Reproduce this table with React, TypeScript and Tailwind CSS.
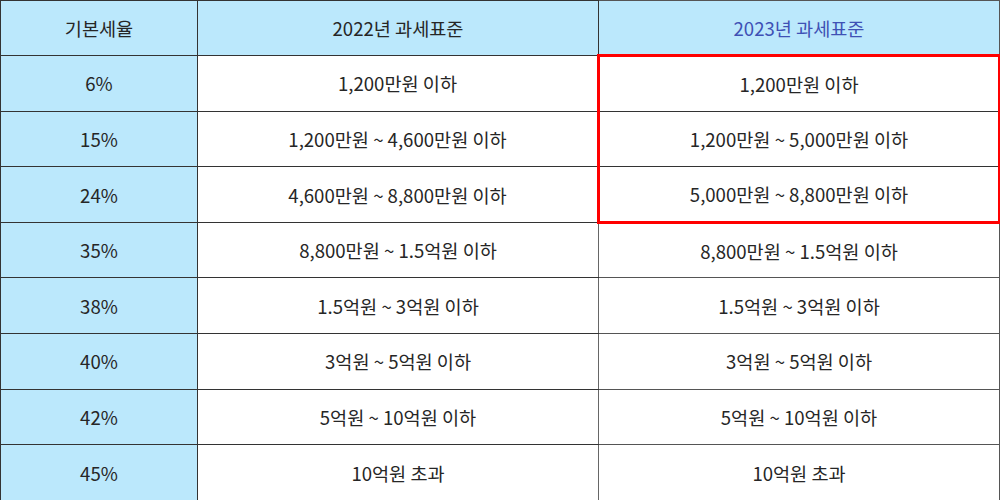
import React from "react";

const rows: [string, string, string][] = [
  ["6%", "1,200만원 이하", "1,200만원 이하"],
  ["15%", "1,200만원 ~ 4,600만원 이하", "1,200만원 ~ 5,000만원 이하"],
  ["24%", "4,600만원 ~ 8,800만원 이하", "5,000만원 ~ 8,800만원 이하"],
  ["35%", "8,800만원 ~ 1.5억원 이하", "8,800만원 ~ 1.5억원 이하"],
  ["38%", "1.5억원 ~ 3억원 이하", "1.5억원 ~ 3억원 이하"],
  ["40%", "3억원 ~ 5억원 이하", "3억원 ~ 5억원 이하"],
  ["42%", "5억원 ~ 10억원 이하", "5억원 ~ 10억원 이하"],
  ["45%", "10억원 초과", "10억원 초과"],
];

export default function App() {
  return (
    <div
      className="w-[1000px] h-[500px] overflow-hidden bg-white"
      style={{ fontFamily: '"Noto Sans CJK KR", "Noto Sans", sans-serif' }}
    >
      <table className="w-[999px] border-collapse table-fixed text-[18.6px] text-[#262626]">
        <colgroup>
          <col className="w-[197px]" />
          <col className="w-[401px]" />
          <col className="w-[401px]" />
        </colgroup>
        <thead>
          <tr className="h-[55px] bg-[#bbe8fc]">
            <th className="border border-[#333] font-normal text-center align-middle">기본세율</th>
            <th className="border border-[#333] font-normal text-center align-middle">2022년 과세표준</th>
            <th className="border border-[#555] border-b-2 border-b-[#ff0000] font-normal text-center align-middle text-[#3f51b5]">
              2023년 과세표준
            </th>
          </tr>
        </thead>
        <tbody>
          {rows.map((r, i) => {
            const red = i < 3;
            const cls = red
              ? "border-x-[3px] border-x-[#ff0000] " +
                (i === 0 ? "border-t-[3px] border-t-[#ff0000] " : "border-t border-t-[#333] ") +
                (i === 2 ? "border-b-[3px] border-b-[#ff0000] " : "border-b border-b-[#333] ")
              : "border border-[#555] ";
            return (
              <tr key={i} className="h-[55.6px]">
                <td className="border border-[#333] bg-[#bbe8fc] text-center align-middle">{r[0]}</td>
                <td className="border border-[#333] border-r-[#666] text-center align-middle">{r[1]}</td>
                <td className={cls + "text-center align-middle"}>{r[2]}</td>
              </tr>
            );
          })}
        </tbody>
      </table>
    </div>
  );
}
